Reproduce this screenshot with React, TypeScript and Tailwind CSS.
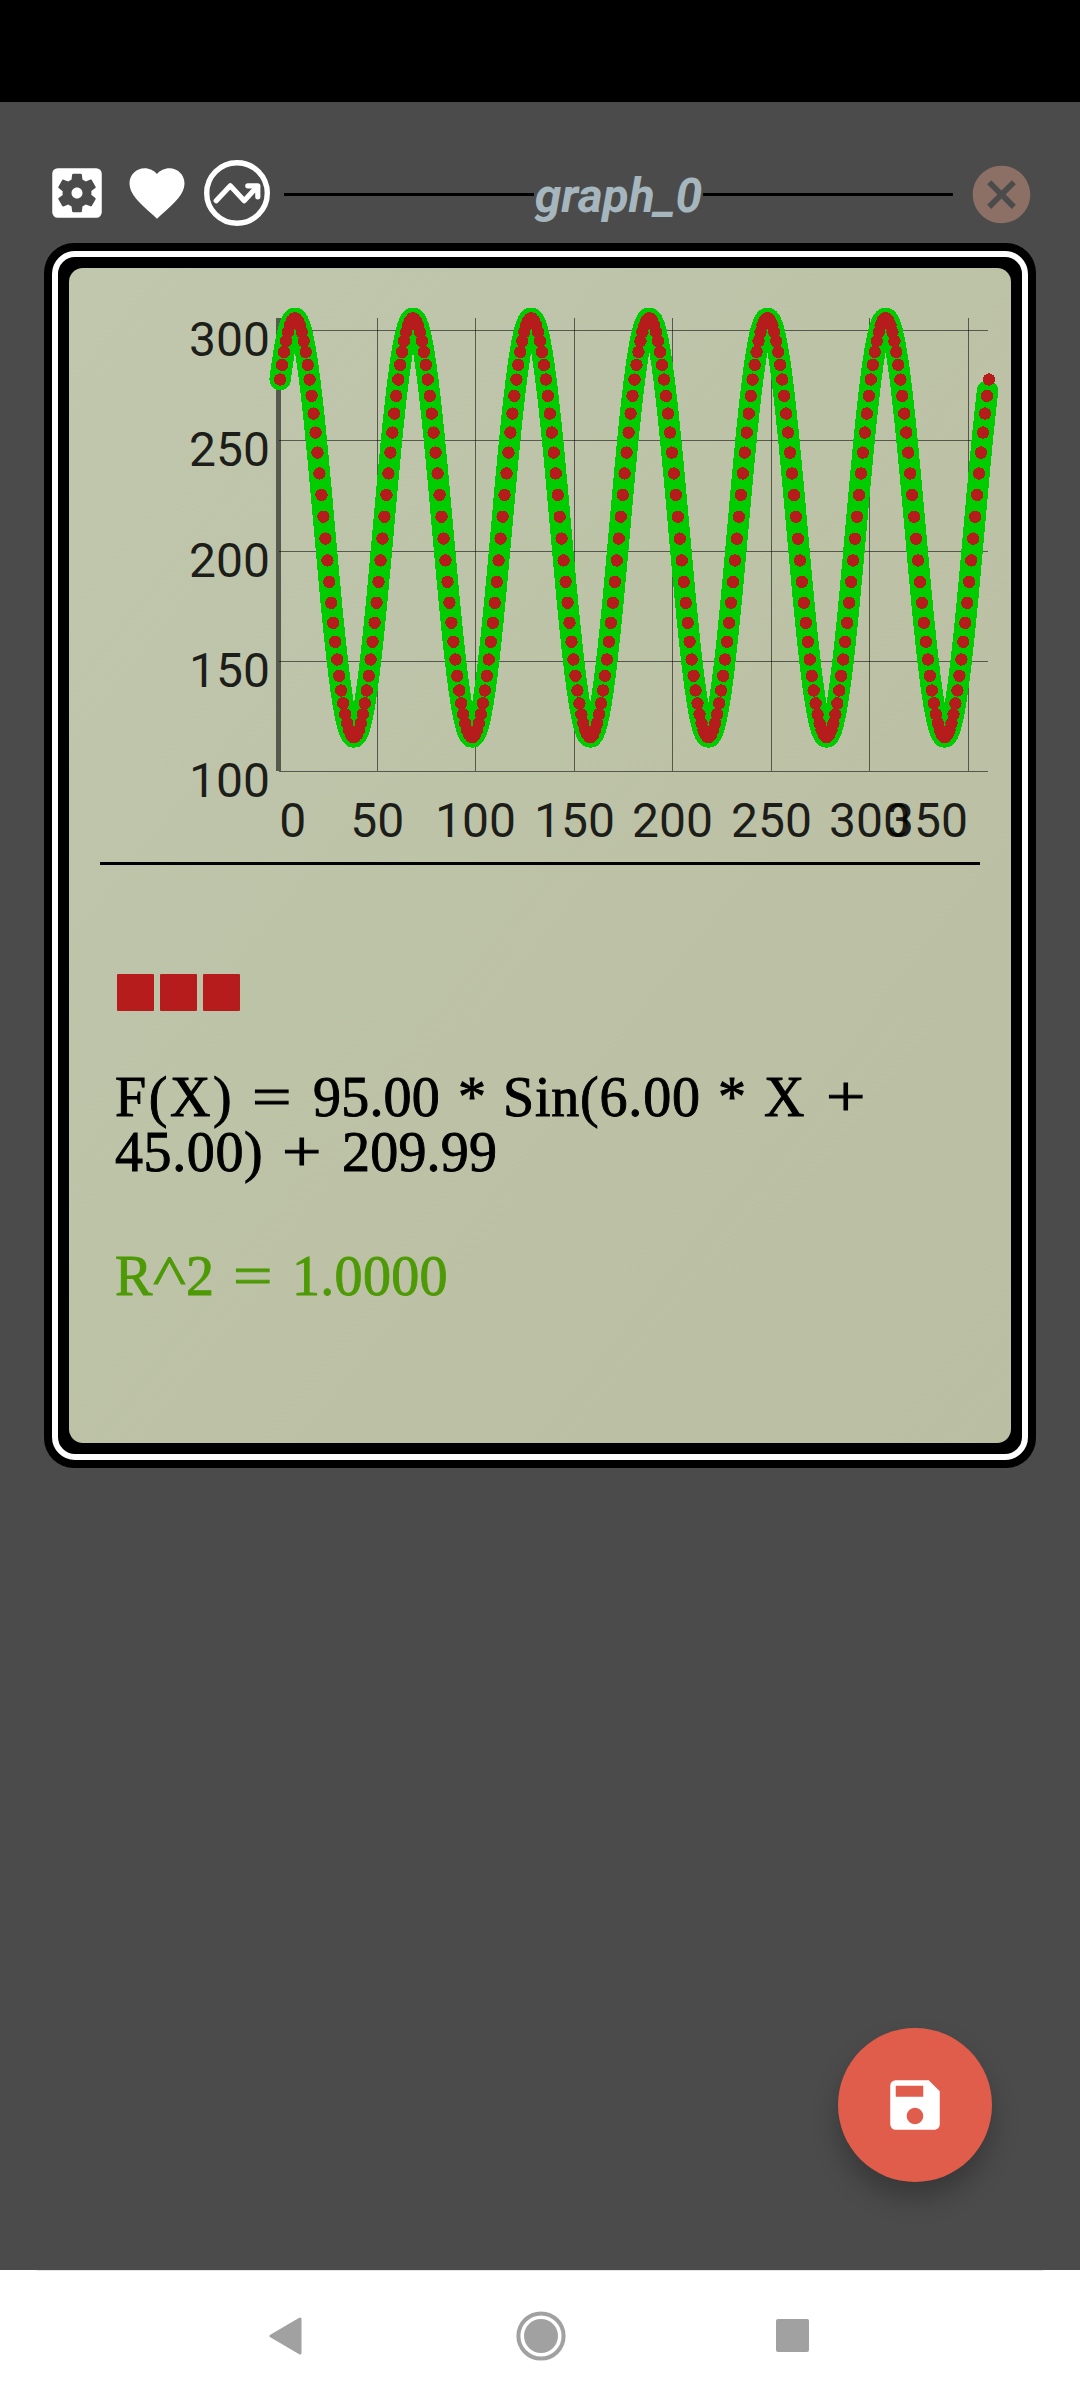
import React from "react";
import { MdSettingsApplications, MdFavorite, MdCancel, MdSave } from "react-icons/md";

const px = (x: number) => 280.1 + 1.969 * x - 69;
const f = (x: number) => 209.99 + 95 * Math.sin(((6 * x + 45) * Math.PI) / 180);
const py = (v: number) => 770.2 - (v - 100) * 2.205 - 268;

const samples = Array.from({ length: 361 }, (_, i) => i);
const curve =
  "M" +
  [...samples.slice(0, 360), 359.3].map((x) => `${px(x).toFixed(2)} ${py(f(x)).toFixed(2)}`).join("L");

const verticals = [377.5, 475.5, 574.5, 672.5, 771.5, 869.5, 968.5];
const horizontals = [330.5, 440.5, 551.5, 661.5, 771.5];
const yLabels = [
  { t: "300", y: 356 },
  { t: "250", y: 466 },
  { t: "200", y: 576.5 },
  { t: "150", y: 687 },
  { t: "100", y: 797 },
];
const xLabels = [
  { t: "0", x: 292.7 },
  { t: "50", x: 377.2 },
  { t: "100", x: 475.5 },
  { t: "150", x: 574.5 },
  { t: "200", x: 672.5 },
  { t: "250", x: 771.5 },
  { t: "300", x: 869.5 },
  { t: "350", x: 927.5 },
];

function Chart() {
  return (
    <svg className="block h-[594px] w-[942px]" viewBox="0 0 942 594">
      <g stroke="#000" strokeOpacity="0.55" shapeRendering="crispEdges">
        {verticals.map((x) => (
          <line key={x} x1={x - 69} x2={x - 69} y1={50} y2={503} />
        ))}
        {horizontals.map((y) => (
          <line key={y} x1={210} x2={919} y1={y - 268} y2={y - 268} />
        ))}
        <line x1={209.5} x2={209.5} y1={50} y2={503} strokeWidth={5} />
      </g>
      <path
        d={curve}
        fill="none"
        stroke="#00cd00"
        strokeWidth={21.4}
        strokeLinecap="round"
        strokeLinejoin="round"
        shapeRendering="crispEdges"
      />
      <g fill="#b71c1c" shapeRendering="crispEdges">
        {samples.map((x) => (
          <circle key={x} cx={px(x)} cy={py(f(x))} r={6.2} />
        ))}
      </g>
      <g fill="#000" fillOpacity="0.86" fontFamily="Roboto, sans-serif" fontSize="48">
        {yLabels.map((l) => (
          <text key={l.t} x={201} y={l.y - 268} textAnchor="end">
            {l.t}
          </text>
        ))}
        {xLabels.map((l) => (
          <text key={l.t} x={l.x - 69} y={568.7} textAnchor="middle">
            {l.t}
          </text>
        ))}
      </g>
    </svg>
  );
}

function TrendIcon() {
  return (
    <svg className="h-[66px] w-[66px]" viewBox="0 0 66 66" fill="none" stroke="#fff">
      <circle cx="33" cy="33" r="30.3" strokeWidth="5.4" />
      <path
        d="M12.2 40.7 26.3 25.8 40.2 40.7 53.8 26M43.8 25.8H53.8V36.8"
        strokeWidth="5.2"
        strokeLinecap="round"
        strokeLinejoin="round"
      />
    </svg>
  );
}

export default function App() {
  return (
    <div className="flex h-[2400px] w-[1080px] flex-col overflow-hidden bg-[#4b4b4b]">
      <div className="h-[102px] shrink-0 bg-black" />

      <header className="mt-[58px] flex h-[66px] shrink-0 items-center pl-11">
        <MdSettingsApplications className="size-[66px] shrink-0 text-white" />
        <MdFavorite className="ml-[14px] size-[66px] shrink-0 text-white" />
        <div className="ml-[14px] shrink-0">
          <TrendIcon />
        </div>
        <div className="mt-[3px] ml-[14px] h-[3px] w-[250px] shrink-0 bg-black" />
        <h1 className="mt-[6px] w-[169px] shrink-0 text-center font-[Roboto,sans-serif] text-[48px] leading-[60px] font-bold whitespace-nowrap text-[#a6b6be] italic">
          graph_0
        </h1>
        <div className="mt-[3px] h-[3px] w-[250px] shrink-0 bg-black" />
        <MdCancel className="mt-[3px] ml-[14px] size-[69px] shrink-0 text-[#8d7065]" />
      </header>

      <main className="mx-11 mt-[17px] h-[1225px] shrink-0 rounded-[30px] bg-black p-2">
        <div className="h-full rounded-[23px] border-[6px] border-white p-[11px]">
          <div className="h-full rounded-[14px] bg-linear-to-br from-[#c0c7ac] to-[#babea2]">
            <Chart />
            <div className="ml-[31px] h-[3px] w-[880px] bg-black" />
            <div className="mt-[109px] ml-12 flex gap-[6px]">
              <div className="size-[37px] rounded-[1px] bg-[#b71c1c]" />
              <div className="size-[37px] rounded-[1px] bg-[#b71c1c]" />
              <div className="size-[37px] rounded-[1px] bg-[#b71c1c]" />
            </div>
            <div className="mt-[59px] ml-[46px] font-['Liberation_Serif',serif] text-[56px] leading-[55px] text-black [-webkit-text-stroke:0.9px_currentColor]">
              <p className="flex whitespace-pre">
                <span className="w-[137px] tracking-[2.6px]">F(X)</span>
                <span className="w-[61px] origin-left scale-x-[1.25]">=</span>
                <span className="w-[145px] tracking-[0.2px]">95.00</span>
                <span className="w-[45px]">*</span>
                <span className="w-[215px] tracking-[0.8px]">Sin(6.00</span>
                <span className="w-[46px]">*</span>
                <span className="w-[62px]">X</span>
                <span className="origin-left scale-x-[1.25]">+</span>
              </p>
              <p className="flex whitespace-pre">
                <span className="w-[167px] tracking-[0.6px]">45.00)</span>
                <span className="w-[60px] origin-left scale-x-[1.25]">+</span>
                <span className="tracking-[0.2px]">209.99</span>
              </p>
              <p className="mt-[69px] flex whitespace-pre text-[#4e9a06]">
                <span className="w-[38px]">R</span>
                <span className="w-[33px] origin-left scale-x-[1.25]">^</span>
                <span className="w-[47px]">2</span>
                <span className="w-[59px] origin-left scale-x-[1.25]">=</span>
                <span className="tracking-[0.3px]">1.0000</span>
              </p>
            </div>
          </div>
        </div>
      </main>

      <div className="flex grow flex-col items-end justify-end pr-[88px] pb-[88px]">
        <button className="flex size-[154px] items-center justify-center rounded-full bg-[#e05c4b] shadow-[0_16px_26px_rgba(0,0,0,0.25)]">
          <MdSave className="size-[66px] text-white" />
        </button>
      </div>

      <nav className="h-[130px] shrink-0 bg-white">
        <div className="mr-[37px] ml-[37px] h-px bg-[#e3e3e3]" />
        <div className="flex h-[129px] items-center justify-between pr-[271px] pl-[269px]">
          <svg className="h-[38px] w-[33px]" viewBox="0 0 33 38">
            <path
              d="M2 19 31 2V36Z"
              fill="#a1a1a1"
              stroke="#a1a1a1"
              strokeWidth="3"
              strokeLinejoin="round"
            />
          </svg>
          <svg className="ml-[3px] h-[50px] w-[50px]" viewBox="0 0 50 50">
            <circle cx="25" cy="25" r="22.6" fill="none" stroke="#a1a1a1" strokeWidth="4" />
            <circle cx="25" cy="25" r="17" fill="#a1a1a1" />
          </svg>
          <div className="size-[33px] rounded-[2px] bg-[#a1a1a1]" />
        </div>
      </nav>
    </div>
  );
}
